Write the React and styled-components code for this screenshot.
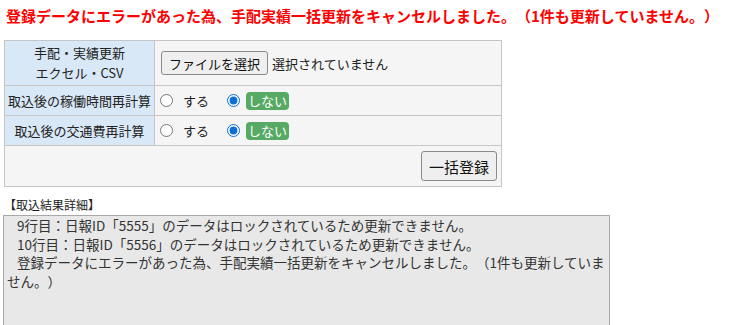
import React from 'react';
import styled, { createGlobalStyle } from 'styled-components';

const GlobalStyle = createGlobalStyle`
  body {
    margin: 0;
    background: #ffffff;
    font-family: "Noto Sans CJK JP", "Noto Sans", sans-serif;
    color: #222;
    text-spacing-trim: space-all;
  }
`;

const Page = styled.div`
  padding: 0 3px;
`;

const ErrorTitle = styled.h1`
  margin: 0;
  padding: 6px 3px 14px;
  font-size: 15px;
  line-height: 20px;
  font-weight: bold;
  color: #ff0000;
  white-space: nowrap;
`;

const FormTable = styled.table`
  margin-left: 1px;
  width: 498px;
  border-collapse: collapse;
  border: 1px solid #c6c6c6;
  font-size: 13px;
`;

const HeadCell = styled.th`
  width: 149px;
  padding: 0;
  background: #d9e8f6;
  border: 1px solid #c6c6c6;
  font-weight: normal;
  line-height: 20px;
  text-align: center;
  height: ${(p) => p.$h}px;
`;

const DataCell = styled.td`
  padding: 0 4px 0 5px;
  background: #f5f5f5;
  border: 1px solid #c6c6c6;
  height: ${(p) => p.$h}px;
  text-align: ${(p) => (p.$right ? 'right' : 'left')};
`;

const Inline = styled.div`
  display: flex;
  align-items: center;
`;

const FileButton = styled.button`
  margin: 0 4px 0 1px;
  height: 24px;
  padding: 0 7px;
  font-family: inherit;
  font-size: 13px;
  color: #111;
  background: #efefef;
  border: 1px solid #8a8a8a;
  border-radius: 3px;
`;

const Radio = styled.input.attrs({ type: 'radio' })`
  margin: 0 10px 0 ${(p) => p.$ml}px;
  width: 13px;
  height: 13px;
  accent-color: #0b6fd6;
`;

const RadioText = styled.span`
  margin-right: 8px;
`;

const Badge = styled.span`
  display: inline-block;
  margin-left: -4px;
  padding: 0 2px;
  height: 18px;
  line-height: 18px;
  border-radius: 4px;
  background: #56aa63;
  color: #ffffff;
`;

const SubmitButton = styled.button`
  height: 30px;
  padding: 0 7px;
  font-family: inherit;
  font-size: 15px;
  color: #111;
  background: #efefef;
  border: 1px solid #8a8a8a;
  border-radius: 3px;
`;

const SectionLabel = styled.div`
  margin-top: 8px;
  padding-left: 1px;
  font-size: 12px;
  line-height: 20px;
`;

const ResultBox = styled.div`
  width: 600px;
  height: 130px;
  padding: 0 2px 0 3px;
  background: #e8e8e8;
  border: 1px solid #a8a8a8;
  font-size: 13.5px;
  line-height: 18.7px;
  color: #333;
`;

const ResultLine = styled.div`
  text-indent: 10px;
`;

const recalcRows = ['取込後の稼働時間再計算', '取込後の交通費再計算'];

const results = [
  '9行目：日報ID「5555」のデータはロックされているため更新できません。',
  '10行目：日報ID「5556」のデータはロックされているため更新できません。',
  '登録データにエラーがあった為、手配実績一括更新をキャンセルしました。（1件も更新していません。）',
];

const App = () => (
  <Page>
    <GlobalStyle />
    <ErrorTitle>登録データにエラーがあった為、手配実績一括更新をキャンセルしました。（1件も更新していません。）</ErrorTitle>
    <FormTable>
      <tbody>
        <tr>
          <HeadCell $h={44}>
            手配・実績更新
            <br />
            エクセル・CSV
          </HeadCell>
          <DataCell $h={44}>
            <Inline>
              <FileButton>ファイルを選択</FileButton>
              <span>選択されていません</span>
            </Inline>
          </DataCell>
        </tr>
        {recalcRows.map((label, i) => (
          <tr key={label}>
            <HeadCell $h={29}>{label}</HeadCell>
            <DataCell $h={29}>
              <Inline>
                <Radio $ml={0} name={'r' + i} />
                <RadioText>する</RadioText>
                <Radio $ml={10} name={'r' + i} defaultChecked />
                <Badge>しない</Badge>
              </Inline>
            </DataCell>
          </tr>
        ))}
        <tr>
          <DataCell colSpan={2} $h={40} $right>
            <SubmitButton>一括登録</SubmitButton>
          </DataCell>
        </tr>
      </tbody>
    </FormTable>
    <SectionLabel>【取込結果詳細】</SectionLabel>
    <ResultBox>
      {results.map((r) => (
        <ResultLine key={r}>{r}</ResultLine>
      ))}
    </ResultBox>
  </Page>
);

export default App;
